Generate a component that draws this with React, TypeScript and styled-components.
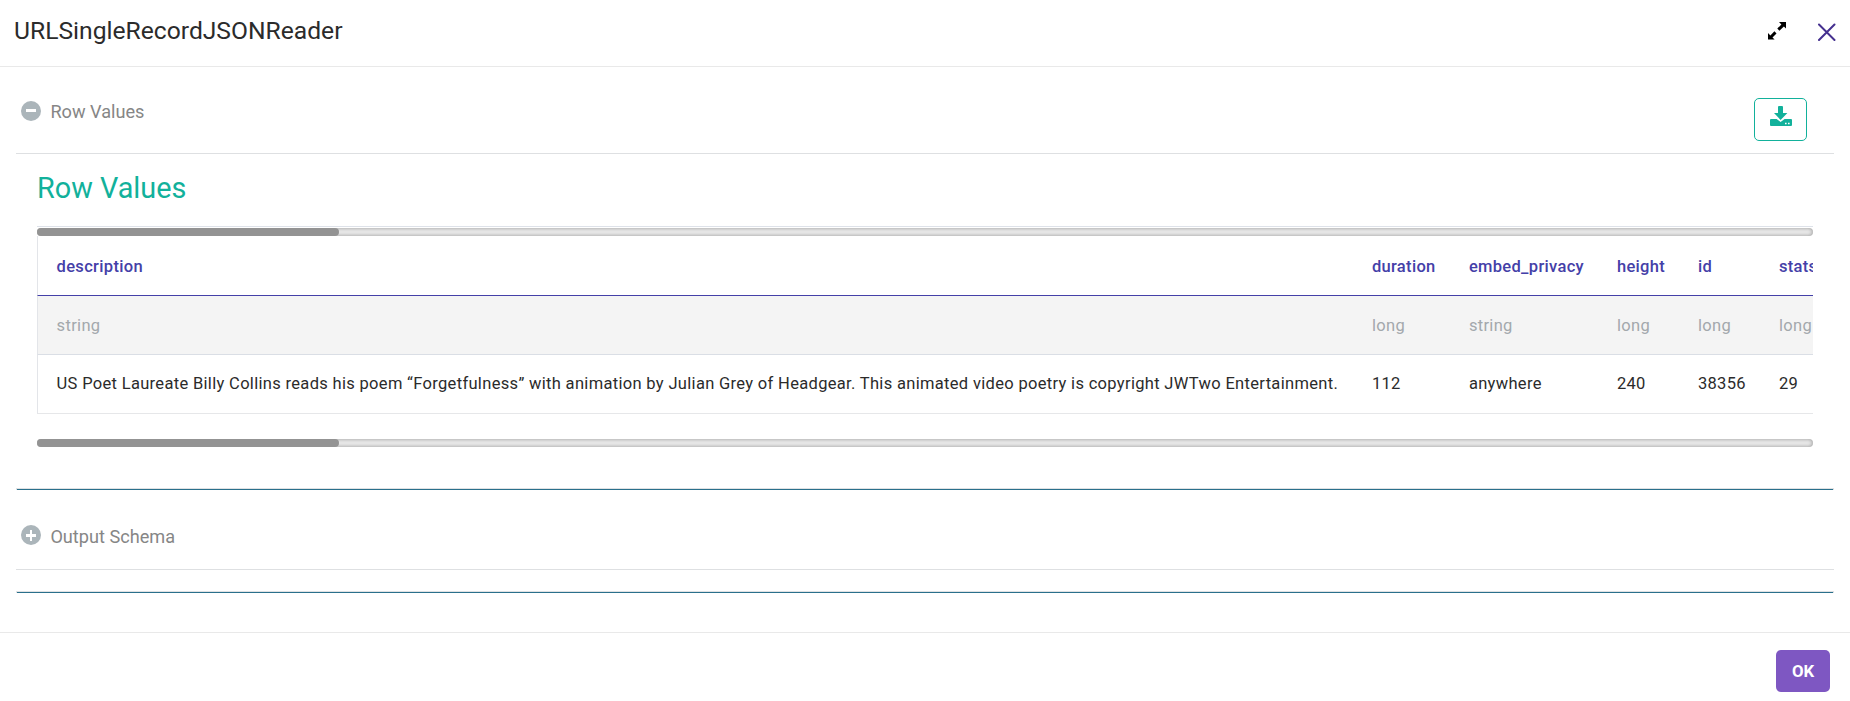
import React from "react";
import styled, { createGlobalStyle } from "styled-components";

const GlobalStyle = createGlobalStyle`
  *, *::before, *::after { box-sizing: border-box; }
  body { margin: 0; background: #fff; font-family: Roboto, "Liberation Sans", sans-serif; }
  button { font-family: inherit; margin: 0; padding: 0; cursor: pointer; }
`;

const Dialog = styled.div`
  display: flex;
  flex-direction: column;
  height: 701px;
  background: #fff;
  overflow: hidden;
`;

const Header = styled.header`
  display: flex;
  align-items: flex-start;
  justify-content: space-between;
  height: 67px;
  padding: 0 14px;
  border-bottom: 1px solid #e9e9e9;
`;

const Title = styled.h1`
  margin: 16px 0 0;
  font-size: 24.65px;
  line-height: 30px;
  font-weight: 400;
  color: #2b2b2b;
`;

const HeaderActions = styled.div`
  display: flex;
  align-items: flex-start;
  gap: 31px;
  margin-top: 22px;
`;

const IconButton = styled.button`
  display: flex;
  border: 0;
  background: none;
`;

const Body = styled.main`
  flex: 1;
  padding: 0 16px;
`;

const SectionHeader = styled.div<{ $height: number; $top: number }>`
  display: flex;
  align-items: flex-start;
  height: ${(p) => p.$height}px;
  padding: ${(p) => p.$top}px 27px 0 5px;
  border-bottom: 1px solid #dee0e2;
`;

const SectionLabel = styled.span<{ $drop?: number }>`
  flex: 1;
  margin: ${(p) => p.$drop ?? 1}px 0 0 9.4px;
  font-size: 18.15px;
  line-height: 20px;
  color: #868686;
`;

const DownloadButton = styled.button`
  display: flex;
  justify-content: center;
  width: 53px;
  height: 43px;
  margin-top: -3px;
  padding-top: 7px;
  border: 1px solid #12b19b;
  border-radius: 5px;
  background: #fff;
`;

const Panel = styled.section`
  height: 334px;
  padding: 16px 21px 0;
`;

const PanelTitle = styled.h2`
  margin: 0 0 20px;
  font-size: 28.8px;
  line-height: 36px;
  font-weight: 400;
  color: #12b19b;
`;

const ScrollTrack = styled.div`
  height: 8px;
  border-radius: 4px;
  background: #ebebeb;
  box-shadow: inset 0 0 4px rgba(0, 0, 0, 0.38);
`;

const ScrollThumb = styled.div`
  width: 302px;
  height: 8px;
  border-radius: 4px;
  background: #939393;
`;

const TableFrame = styled.div`
  margin-bottom: 25px;
  padding-top: 1px;
  border-top: 1px solid #dee2e9;
  overflow: hidden;
`;

type RowKind = "head" | "type" | "data";

const rowText = {
  head: { color: "#4440a8", line: "#4440a8", fill: "#fff", weight: 500, height: 60, top: 2 },
  type: { color: "#a3a8ac", line: "#dadee5", fill: "#f4f4f4", weight: 400, height: 59, top: 2 },
  data: { color: "#2b2b2b", line: "#e6e7e9", fill: "#fff", weight: 400, height: 59, top: 0 },
};

const Row = styled.div<{ $kind: RowKind }>`
  display: grid;
  grid-template-columns: 1315.3px 97px 148px 81px 81px 160px;
  width: 1882px;
  height: ${(p) => rowText[p.$kind].height}px;
  padding: ${(p) => rowText[p.$kind].top}px 0 0 18.6px;
  align-items: center;
  border-left: 1px solid #e3e5e9;
  border-bottom: 1px solid ${(p) => rowText[p.$kind].line};
  background: ${(p) => rowText[p.$kind].fill};
  color: ${(p) => rowText[p.$kind].color};
  font-size: 16.5px;
  font-weight: ${(p) => rowText[p.$kind].weight};
  letter-spacing: 0.32px;
  line-height: 24px;
  white-space: nowrap;
`;

const Divider = styled.div`
  height: 2px;
  border: 1px solid #dfe1e3;
  border-bottom: 0;
  background: #2a708c;
`;

const Spacer = styled.div`
  height: 21px;
`;

const Footer = styled.footer`
  display: flex;
  justify-content: flex-end;
  height: 69px;
  padding: 17px 20px 0;
  border-top: 1px solid #e9e9e9;
`;

const OkButton = styled.button`
  width: 54px;
  height: 42px;
  border: 0;
  border-radius: 5px;
  background: #7e57c2;
  color: #fff;
  font-size: 16.8px;
  font-weight: 700;
`;

const columns = [
  ["description", "string", "US Poet Laureate Billy Collins reads his poem “Forgetfulness” with animation by Julian Grey of Headgear. This animated video poetry is copyright JWTwo Entertainment."],
  ["duration", "long", "112"],
  ["embed_privacy", "string", "anywhere"],
  ["height", "long", "240"],
  ["id", "long", "38356"],
  ["stats", "long", "29"],
];

const kinds: RowKind[] = ["head", "type", "data"];

function ToggleIcon({ open }: { open: boolean }) {
  return (
    <svg width="20" height="20" viewBox="0 0 20 20">
      <circle cx="10" cy="10" r="10" fill="#abb5ba" />
      <path d={open ? "M5 8h10v3H5z" : "M5 9h4V5h2v4h4v3h-4v4H9v-4H5z"} fill="#fff" />
    </svg>
  );
}

function ScrollBar() {
  return (
    <ScrollTrack>
      <ScrollThumb />
    </ScrollTrack>
  );
}

export default function App() {
  return (
    <>
      <GlobalStyle />
      <Dialog>
        <Header>
          <Title>URLSingleRecordJSONReader</Title>
          <HeaderActions>
            <IconButton aria-label="Expand">
              <svg width="18" height="18" viewBox="0 0 18 18" fill="#000">
                <path d="M11 0h7v6.6l-2.1-2.1-4.5 4.2-2.1-2.1L13.4 2.4z" />
                <path d="M0 11v6.6h6.6l-2.1-2 4-4.2-2.1-2.1-4 4.1z" />
              </svg>
            </IconButton>
            <IconButton aria-label="Close">
              <svg width="19" height="19" viewBox="0 0 19 19" stroke="#45308f" strokeWidth="2" strokeLinecap="round">
                <path d="M2 2.5l15.5 15.5M17.5 2.5L2 18" />
              </svg>
            </IconButton>
          </HeaderActions>
        </Header>
        <Body>
          <SectionHeader $height={87} $top={34}>
            <ToggleIcon open />
            <SectionLabel>Row Values</SectionLabel>
            <DownloadButton aria-label="Download">
              <svg width="22" height="20" viewBox="0 0 22 20" fill="#12b19b">
                <path d="M8 1q0-1 1-1h3q1 0 1 1v6h4.4L10.6 14 4 7h4z" />
                <path d="M1 13h5.6l4 3 4-3H21q1 0 1 1v5q0 1-1 1H1q-1 0-1-1v-5q0-1 1-1z" />
                <path d="M15 16.8h1.6v1.4H15zM18 16.8h1.6v1.4H18z" fill="#fff" />
              </svg>
            </DownloadButton>
          </SectionHeader>
          <Panel>
            <PanelTitle>Row Values</PanelTitle>
            <TableFrame>
              <ScrollBar />
              {kinds.map((kind, i) => (
                <Row key={kind} $kind={kind}>
                  {columns.map((column) => (
                    <span key={column[0]}>{column[i]}</span>
                  ))}
                </Row>
              ))}
            </TableFrame>
            <ScrollBar />
          </Panel>
          <Divider />
          <SectionHeader $height={80} $top={35}>
            <ToggleIcon open={false} />
            <SectionLabel $drop={2}>Output Schema</SectionLabel>
          </SectionHeader>
          <Spacer />
          <Divider />
        </Body>
        <Footer>
          <OkButton>OK</OkButton>
        </Footer>
      </Dialog>
    </>
  );
}
